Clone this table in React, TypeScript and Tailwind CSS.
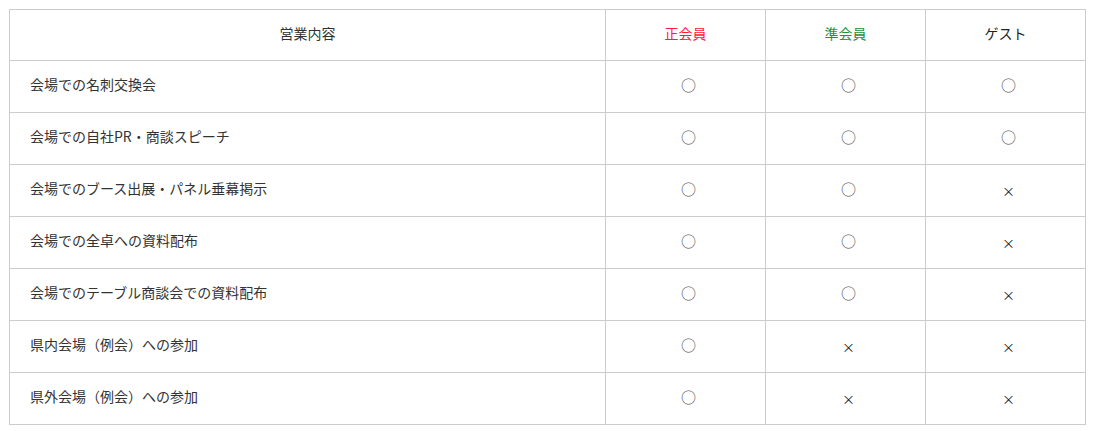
import React from "react";

type Mark = "o" | "x";

const rows: { label: string; marks: [Mark, Mark, Mark] }[] = [
  { label: "会場での名刺交換会", marks: ["o", "o", "o"] },
  { label: "会場での自社PR・商談スピーチ", marks: ["o", "o", "o"] },
  { label: "会場でのブース出展・パネル垂幕掲示", marks: ["o", "o", "x"] },
  { label: "会場での全卓への資料配布", marks: ["o", "o", "x"] },
  { label: "会場でのテーブル商談会での資料配布", marks: ["o", "o", "x"] },
  { label: "県内会場（例会）への参加", marks: ["o", "x", "x"] },
  { label: "県外会場（例会）への参加", marks: ["o", "x", "x"] },
];

const MarkCell = ({ mark }: { mark: Mark }) => (
  <td className="border border-[#cccccc] pl-[6px] text-center align-middle">
    {mark === "o" ? (
      <span className="relative -top-[1px] text-[15px] text-[#555555]">○</span>
    ) : (
      <span className="text-[13px] text-[#222222]">×</span>
    )}
  </td>
);

export default function App() {
  return (
    <div className="bg-white p-[9px] font-['Noto_Sans_CJK_JP','Liberation_Sans',sans-serif] text-[14px] text-[#333333]">
      <table className="w-[1077px] table-fixed border-collapse">
        <colgroup>
          <col className="w-[596px]" />
          <col className="w-[160px]" />
          <col className="w-[160px]" />
          <col className="w-[160px]" />
        </colgroup>
        <thead>
          <tr className="h-[51px]">
            <th className="border border-[#cccccc] pb-[4px] font-normal">営業内容</th>
            <th className="border border-[#cccccc] pb-[4px] font-normal text-[#ff2038]">正会員</th>
            <th className="border border-[#cccccc] pb-[4px] font-normal text-[#24913a]">準会員</th>
            <th className="border border-[#cccccc] pb-[4px] font-normal text-[#222222]">ゲスト</th>
          </tr>
        </thead>
        <tbody>
          {rows.map((row) => (
            <tr key={row.label} className="h-[52px]">
              <td className="border border-[#cccccc] pb-[4px] pl-[20px] text-left">{row.label}</td>
              {row.marks.map((m, i) => (
                <MarkCell key={i} mark={m} />
              ))}
            </tr>
          ))}
        </tbody>
      </table>
    </div>
  );
}
